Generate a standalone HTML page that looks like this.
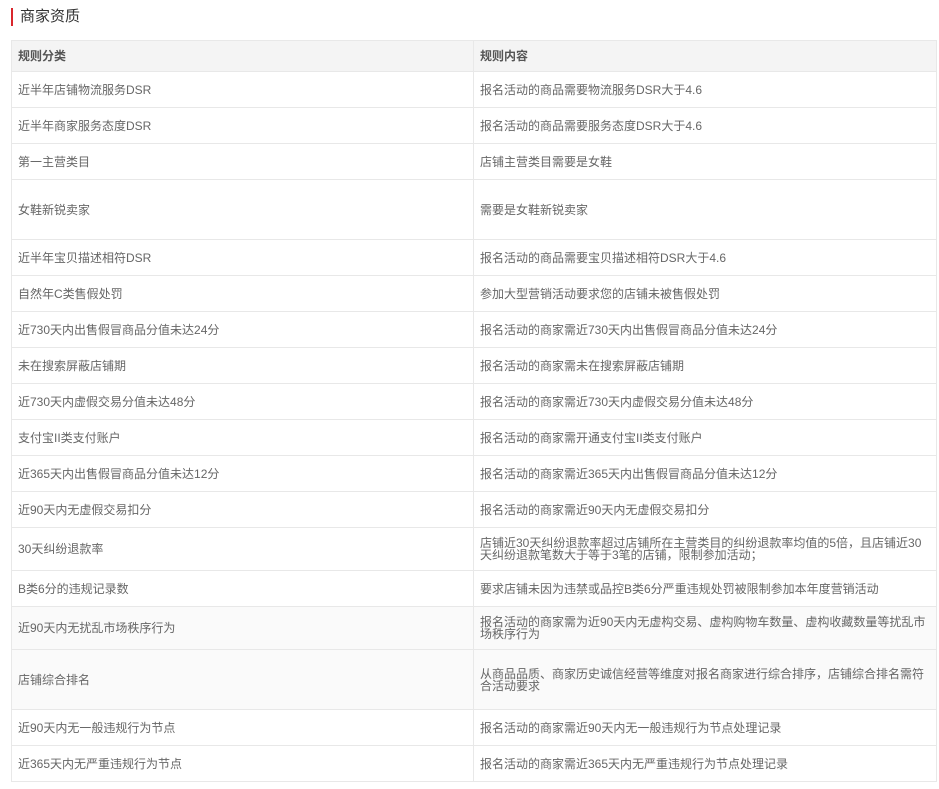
<!DOCTYPE html>
<html><head><meta charset="utf-8"><style>
body{margin:0;background:#fff;font-family:"Liberation Sans","Noto Sans CJK SC",sans-serif;}
.t{position:absolute;left:11px;top:8px;height:18px;border-left:2px solid #d9262c;padding-left:7px;font-size:15px;line-height:18px;color:#333;}
table{position:absolute;left:11px;top:40px;width:926px;border-collapse:collapse;table-layout:fixed;}
td,th{border:1px solid #e8e8e8;font-size:12px;color:#666;padding:0 6px;text-align:left;line-height:12px;vertical-align:middle;}
th{background:#f4f4f4;font-weight:bold;color:#555;height:30px;}
td{height:35px;}
tr.g td{background:#fafafa;}
</style></head><body>
<div class="t">商家资质</div>
<table>
<colgroup><col style="width:462px"><col></colgroup>
<tr><th>规则分类</th><th>规则内容</th></tr>
<tr><td>近半年店铺物流服务DSR</td><td>报名活动的商品需要物流服务DSR大于4.6</td></tr>
<tr><td>近半年商家服务态度DSR</td><td>报名活动的商品需要服务态度DSR大于4.6</td></tr>
<tr><td>第一主营类目</td><td>店铺主营类目需要是女鞋</td></tr>
<tr><td style="height:59px">女鞋新锐卖家</td><td>需要是女鞋新锐卖家</td></tr>
<tr><td>近半年宝贝描述相符DSR</td><td>报名活动的商品需要宝贝描述相符DSR大于4.6</td></tr>
<tr><td>自然年C类售假处罚</td><td>参加大型营销活动要求您的店铺未被售假处罚</td></tr>
<tr><td>近730天内出售假冒商品分值未达24分</td><td>报名活动的商家需近730天内出售假冒商品分值未达24分</td></tr>
<tr><td>未在搜索屏蔽店铺期</td><td>报名活动的商家需未在搜索屏蔽店铺期</td></tr>
<tr><td>近730天内虚假交易分值未达48分</td><td>报名活动的商家需近730天内虚假交易分值未达48分</td></tr>
<tr><td>支付宝II类支付账户</td><td>报名活动的商家需开通支付宝II类支付账户</td></tr>
<tr><td>近365天内出售假冒商品分值未达12分</td><td>报名活动的商家需近365天内出售假冒商品分值未达12分</td></tr>
<tr><td>近90天内无虚假交易扣分</td><td>报名活动的商家需近90天内无虚假交易扣分</td></tr>
<tr><td style="height:42px">30天纠纷退款率</td><td>店铺近30天纠纷退款率超过店铺所在主营类目的纠纷退款率均值的5倍，且店铺近30天纠纷退款笔数大于等于3笔的店铺，限制参加活动；</td></tr>
<tr><td>B类6分的违规记录数</td><td>要求店铺未因为违禁或品控B类6分严重违规处罚被限制参加本年度营销活动</td></tr>
<tr class="g"><td style="height:42px">近90天内无扰乱市场秩序行为</td><td>报名活动的商家需为近90天内无虚构交易、虚构购物车数量、虚构收藏数量等扰乱市场秩序行为</td></tr>
<tr class="g"><td style="height:59px">店铺综合排名</td><td>从商品品质、商家历史诚信经营等维度对报名商家进行综合排序，店铺综合排名需符合活动要求</td></tr>
<tr><td>近90天内无一般违规行为节点</td><td>报名活动的商家需近90天内无一般违规行为节点处理记录</td></tr>
<tr><td>近365天内无严重违规行为节点</td><td>报名活动的商家需近365天内无严重违规行为节点处理记录</td></tr>
</table>
</body></html>
